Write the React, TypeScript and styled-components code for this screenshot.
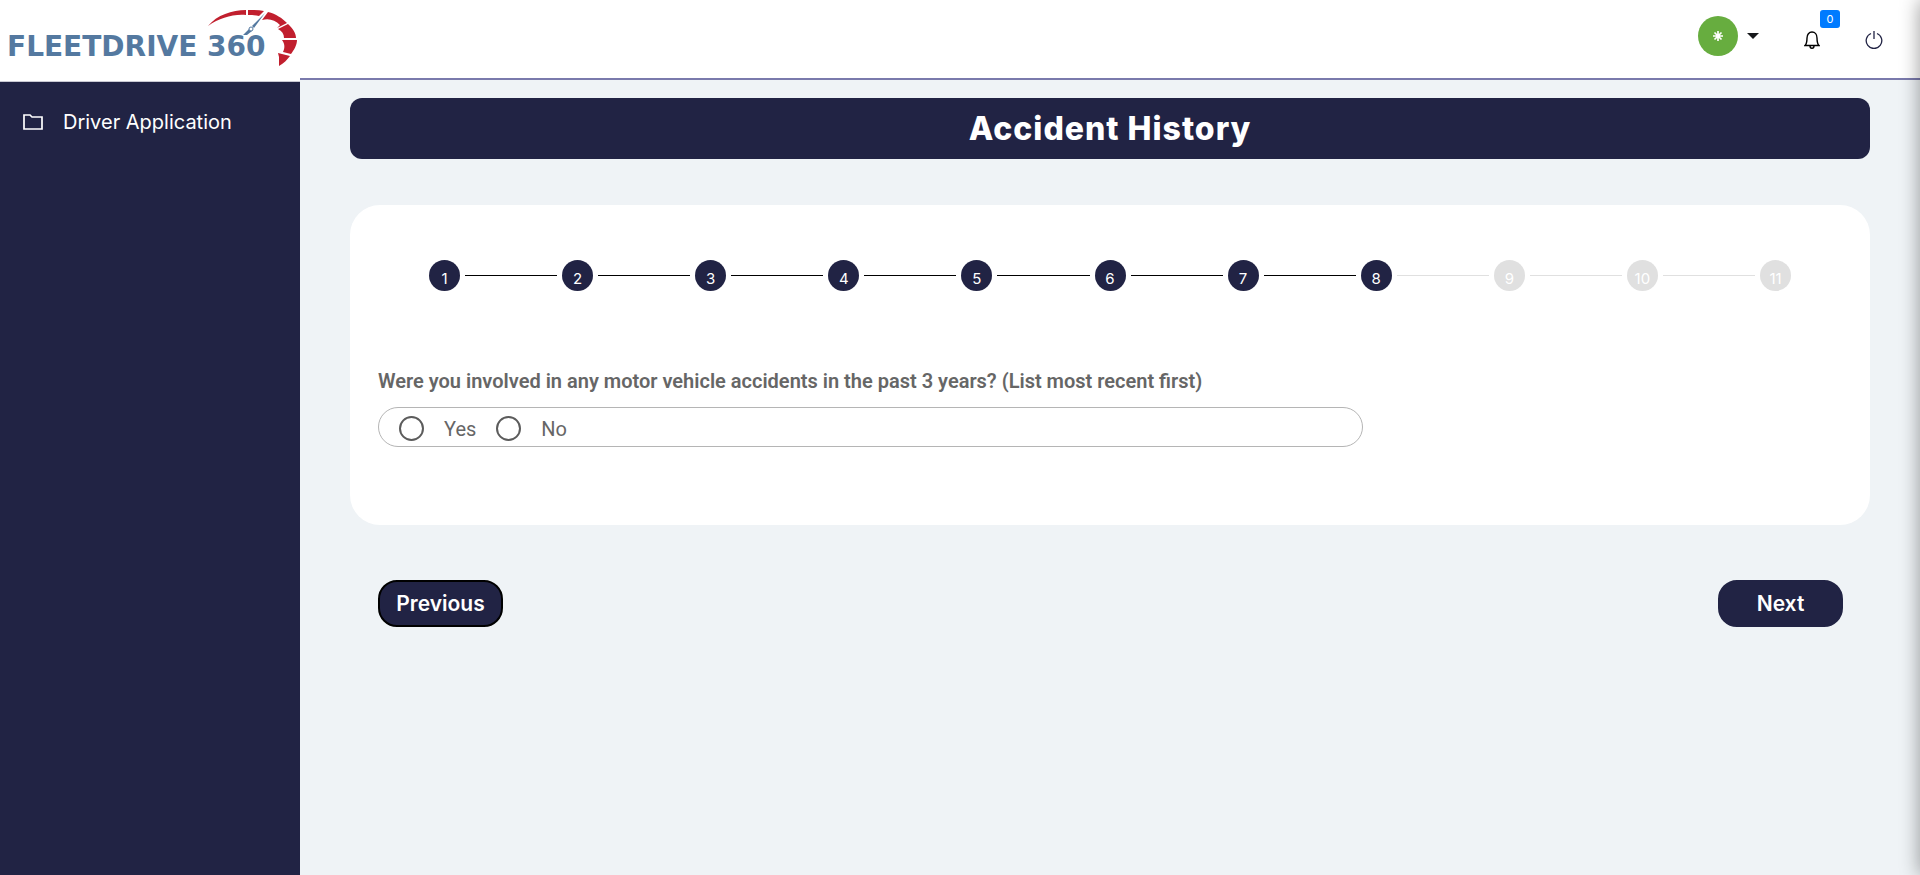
import React, { useState } from "react";
import styled, { createGlobalStyle } from "styled-components";

const NAVY = "#212344";
const UI_FONT = `"Inter", "Open Sans", sans-serif`;
const FORM_FONT = `"Roboto", "Liberation Sans", sans-serif`;

const GlobalStyle = createGlobalStyle`
  *, *::before, *::after { box-sizing: border-box; }
  body {
    margin: 0;
    background: #eff3f6;
    font-family: ${UI_FONT};
    color: #212529;
  }
`;

const Shell = styled.div`
  display: grid;
  grid-template-columns: 300px minmax(0, 1fr);
  min-height: 100vh;
`;

const Sidebar = styled.aside`
  display: flex;
  flex-direction: column;
  background: ${NAVY};
`;

const Brand = styled.a`
  display: block;
  height: 82px;
  background: #fff;
  border-bottom: 1px solid #c9c9d3;
`;

const Nav = styled.nav`
  padding: 24px 23px;
`;

const NavLink = styled.a`
  display: flex;
  align-items: center;
  gap: 20px;
  height: 32px;
  color: #fff;
  font-size: 20px;
  text-decoration: none;
`;

const Column = styled.div`
  display: flex;
  flex-direction: column;
`;

const Header = styled.header`
  display: flex;
  justify-content: flex-end;
  align-items: flex-start;
  height: 80px;
  padding: 10px 37px 0 0;
  background: #fff;
  border-bottom: 2px solid #7a7aac;
`;

const PlainButton = styled.button`
  display: flex;
  padding: 0;
  border: 0;
  background: none;
  color: ${NAVY};
  cursor: pointer;
`;

const AccountButton = styled(PlainButton)`
  align-items: center;
  gap: 9px;
  margin: 6px 45px 0 0;
`;

const Avatar = styled.span`
  display: grid;
  place-items: center;
  width: 40px;
  height: 40px;
  border-radius: 50%;
  background: #67ad3f;
`;

const Caret = styled.span`
  border: 6px solid transparent;
  border-top-color: #16181b;
  border-bottom: 0;
`;

const BellButton = styled(PlainButton)`
  align-items: flex-start;
  margin-right: 25px;
`;

const BellIcon = styled.svg`
  margin-top: 21px;
`;

const Badge = styled.span`
  width: 20px;
  height: 18px;
  border-radius: 3px;
  background: #007bff;
  color: #fff;
  font: 11px/18px ${UI_FONT};
  text-align: center;
`;

const PowerButton = styled(PlainButton)`
  margin-top: 21px;
`;

const Main = styled.main`
  padding: 18px 50px 50px;
`;

const Title = styled.h1`
  margin: 0 0 46px;
  border-radius: 12px;
  background: ${NAVY};
  color: #fff;
  font-size: 32px;
  font-weight: 800;
  line-height: 61px;
  letter-spacing: 1px;
  text-align: center;
`;

const Card = styled.section`
  padding: 55px 28px 78px;
  border-radius: 30px;
  background: #fff;
`;

const Steps = styled.ol`
  display: flex;
  margin: 0 0 76px;
  padding: 0;
  list-style: none;
`;

const Step = styled.li`
  display: flex;
  flex: 1;
  align-items: center;
  gap: 5px;
`;

const StepLine = styled.span<{ $tone: string }>`
  flex: 1;
  height: 1px;
  background: ${(p) => p.$tone};
`;

const StepCircle = styled.span<{ $done: boolean }>`
  width: 31px;
  height: 31px;
  padding-top: 3px;
  border-radius: 50%;
  background: ${(p) => (p.$done ? NAVY : "#e0e0e0")};
  color: #fff;
  font-size: 15px;
  line-height: 31px;
  text-align: center;
`;

const Question = styled.fieldset`
  margin: 0;
  padding: 0;
  border: 0;
  color: #666;
  font-family: ${FORM_FONT};
  font-size: 20px;
`;

const Legend = styled.legend`
  padding: 0;
  margin-bottom: 12px;
  font-weight: 600;
  line-height: 28px;
`;

const Choices = styled.div`
  display: flex;
  gap: 20px;
  align-items: center;
  max-width: 985px;
  height: 40px;
  padding: 3px 20px 0;
  border: 1px solid #b5b5b5;
  border-radius: 20px;
`;

const Choice = styled.label`
  display: flex;
  align-items: center;
  gap: 20px;
`;

const Radio = styled.input`
  appearance: none;
  width: 25px;
  height: 25px;
  margin: 0;
  border: 2px solid #5c5c5c;
  border-radius: 50%;

  &:checked {
    background: radial-gradient(#666 0 6px, transparent 7px);
  }
`;

const Actions = styled.div`
  display: flex;
  justify-content: space-between;
  padding: 55px 27px 0 28px;
`;

const ActionButton = styled.button<{ $outlined?: boolean }>`
  width: 125px;
  height: 47px;
  padding: 0;
  border: 2px solid ${(p) => (p.$outlined ? "#000" : NAVY)};
  border-radius: 19px;
  background: ${NAVY};
  color: #fff;
  font: 600 21px ${UI_FONT};
  cursor: pointer;
`;

const EdgeShadow = styled.div`
  position: fixed;
  top: 0;
  bottom: 0;
  left: 100%;
  width: 20px;
  box-shadow: 0 0 20px rgba(0, 0, 0, 0.4);
`;

const CURRENT_STEP = 8;
const STEPS = Array.from({ length: 11 }, (_, i) => i + 1);

function lineTone(step: number) {
  if (step < 1 || step >= STEPS.length) return "transparent";
  return step < CURRENT_STEP ? "#000" : "#e0e0e0";
}

function Logo() {
  return (
    <svg width="300" height="80" viewBox="0 0 300 80" role="img" aria-label="FleetDrive 360">
      <text x="7" y="56" fill="#5479a0" fontFamily="DejaVu Sans, sans-serif" fontWeight="700" fontSize="28">
        FLEETDRIVE 360
      </text>
      <path fill="#c11f2e" d="M208 26C217 15 232 10 246 10V15C232 14 220 18 208 26Z" />
      <path fill="#c11f2e" d="M248 10C254 10 259 10 264 11L259 16C255 15 252 15 248 15Z" />
      <path fill="#c11f2e" d="M268 12C276 14 282 18 287 23L277 28L280 25C275 20 269 18 262 20Z" />
      <path fill="#c11f2e" d="M288 24C293 29 296 33 296 38H284C284 34 282 31 278 29Z" />
      <path fill="#c11f2e" d="M297 40C297 45 294 50 291 54L283 52C285 48 285 44 282 40Z" />
      <path fill="#c11f2e" d="M290 56C287 60 284 63 279 66V57L278 53Z" />
      <path fill="#5479a0" d="M265 13L254 28L252 26ZM249 29L252 31L247 35H243Z" />
      <circle cx="251" cy="29" r="2" stroke="#5479a0" strokeWidth="1" fill="#fff" />
    </svg>
  );
}

export default function App() {
  const [answer, setAnswer] = useState("");
  return (
    <>
      <GlobalStyle />
      <Shell>
        <Sidebar>
          <Brand href="#home">
            <Logo />
          </Brand>
          <Nav>
            <NavLink href="#driver-application">
              <svg width="20" height="16" viewBox="0 0 20 16" fill="none" stroke="#fff" strokeWidth="1.7" aria-hidden="true">
                <path d="M1 1H7L9 3H19V15H1Z" />
              </svg>
              Driver Application
            </NavLink>
          </Nav>
        </Sidebar>
        <Column>
          <Header>
            <AccountButton aria-label="Account">
              <Avatar>
                <svg width="10" height="10" viewBox="0 0 10 10" stroke="#fff" strokeWidth="1.7" aria-hidden="true">
                  <path d="M5 0V10M0 5H10M1.500 1.500L8.500 8.500M8.500 1.500L1.500 8.500" />
                </svg>
              </Avatar>
              <Caret />
            </AccountButton>
            <BellButton aria-label="Notifications">
              <BellIcon width="16" height="18" viewBox="0 0 16 18" fill="none" stroke="#000" strokeWidth="1.400" aria-hidden="true">
                <path d="M1 14.500C3 12.500 3 10 3 7C3 3.500 5 1 8 1S13 3.500 13 7C13 10 13 12.500 15 14.500ZM6 15C6 18 10 18 10 15" />
              </BellIcon>
              <Badge>0</Badge>
            </BellButton>
            <PowerButton aria-label="Log out">
              <svg width="18" height="18" viewBox="0 0 18 18" fill="none" stroke={NAVY} strokeWidth="1.300" aria-hidden="true">
                <path d="M6 2.500A7.800 7.800 0 1 0 12 2.500M9 0V8" />
              </svg>
            </PowerButton>
          </Header>
          <Main>
            <Title>Accident History</Title>
            <Card>
              <Steps>
                {STEPS.map((n) => (
                  <Step key={n} aria-current={n === CURRENT_STEP ? "step" : undefined}>
                    <StepLine $tone={lineTone(n - 1)} />
                    <StepCircle $done={n <= CURRENT_STEP}>{n}</StepCircle>
                    <StepLine $tone={lineTone(n)} />
                  </Step>
                ))}
              </Steps>
              <Question>
                <Legend>Were you involved in any motor vehicle accidents in the past 3 years? (List most recent first)</Legend>
                <Choices>
                  {["Yes", "No"].map((option) => (
                    <Choice key={option}>
                      <Radio
                        type="radio"
                        name="accidents"
                        value={option}
                        checked={answer === option}
                        onChange={() => setAnswer(option)}
                      />
                      {option}
                    </Choice>
                  ))}
                </Choices>
              </Question>
            </Card>
            <Actions>
              <ActionButton $outlined>Previous</ActionButton>
              <ActionButton>Next</ActionButton>
            </Actions>
          </Main>
        </Column>
      </Shell>
      <EdgeShadow />
    </>
  );
}
